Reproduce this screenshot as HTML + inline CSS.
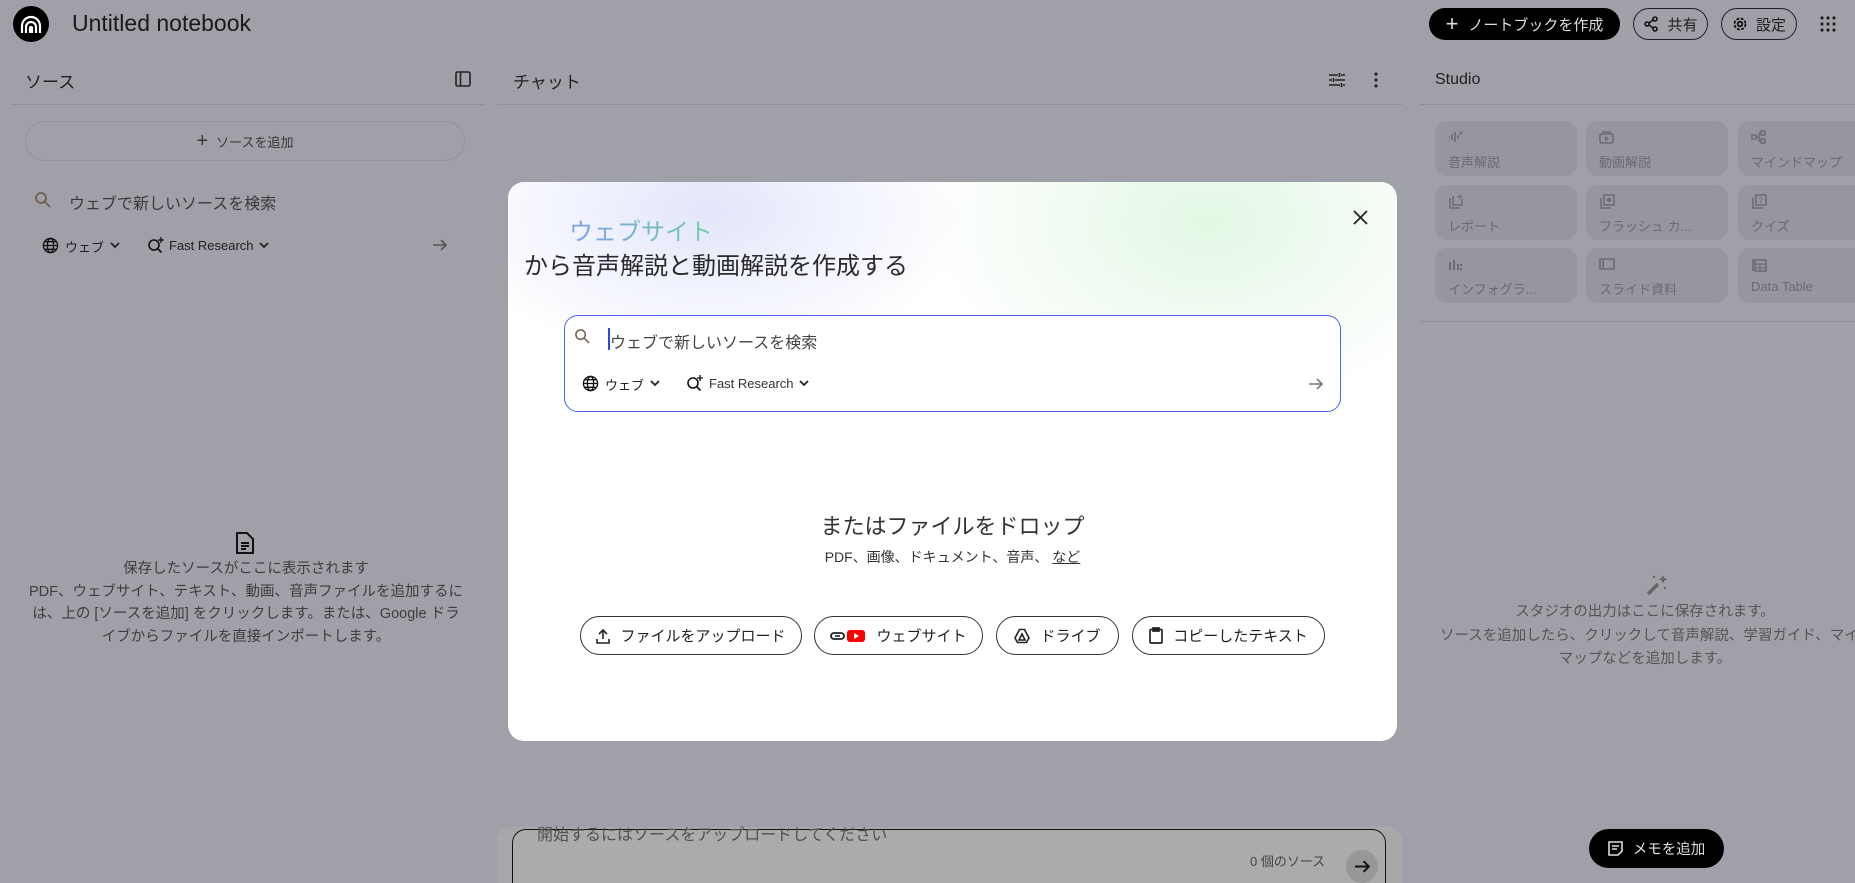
<!DOCTYPE html>
<html style="width:1855px;height:883px;overflow:hidden"><head><meta charset="utf-8"><style>
*{box-sizing:border-box;margin:0;padding:0}
body{width:1855px;height:883px;overflow:hidden;background:#a0a0a8;font-family:"Liberation Sans","Noto Sans CJK JP",sans-serif;color:#1f1f1f;position:relative}
.a{position:absolute;white-space:nowrap}
.pill{position:absolute;border:1.5px solid #222;border-radius:22px;display:flex;align-items:center;justify-content:center;gap:8px;font-size:15px}
.tile{position:absolute;background:#96969e;border-radius:12px;width:142px;height:55px;color:#6a6a70;font-size:13px}
.tile span{position:absolute;left:13px;top:31px}
.tile svg{position:absolute;left:13px;top:9px}
.hr{position:absolute;height:1px;background:#8f8f97}
.mb{position:absolute;top:616px;height:39px;border:1.2px solid #333;border-radius:20px;display:flex;align-items:center;justify-content:center;gap:10px;font-size:15px;color:#222;background:#fff}
</style></head><body>
<!-- header -->
<div class="a" style="left:13px;top:6px;width:36px;height:36px;border-radius:50%;background:#000"></div>
<svg class="a" style="left:19px;top:13px" width="24" height="22" viewBox="0 0 24 22" fill="none" stroke="#fff" stroke-width="2.2"><path d="M3 20V13a9 9 0 0 1 18 0v7"/><path d="M7 20v-6a5 5 0 0 1 10 0v6"/><path d="M11 20v-5a1 1 0 0 1 2 0v5"/></svg>
<div class="a" style="left:72px;top:10px;font-size:23px;color:#1a1a1a">Untitled notebook</div>
<div class="a" style="left:1429px;top:8px;width:191px;height:32px;border-radius:16px;background:#000;color:#ddd;font-size:15px;display:flex;align-items:center;justify-content:center;gap:10px"><span style="font-size:22px">+</span>ノートブックを作成</div>
<div class="pill" style="left:1633px;top:8px;width:75px;height:32px"><svg width="16" height="16" viewBox="0 0 16 16" fill="none" stroke="#111" stroke-width="1.6"><circle cx="12" cy="3" r="2"/><circle cx="4" cy="8" r="2"/><circle cx="12" cy="13" r="2"/><path d="M6 7l4-3M6 9l4 3"/></svg>共有</div>
<div class="pill" style="left:1721px;top:8px;width:76px;height:32px"><svg width="16" height="16" viewBox="0 0 16 16" fill="none" stroke="#111" stroke-width="1.8"><circle cx="8" cy="8" r="2.3"/><circle cx="8" cy="8" r="5.5" stroke-dasharray="3 1.4"/></svg>設定</div>
<svg class="a" style="left:1820px;top:16px" width="16" height="16" viewBox="0 0 16 16" fill="#222"><g><circle cx="2" cy="2" r="1.6"/><circle cx="8" cy="2" r="1.6"/><circle cx="14" cy="2" r="1.6"/><circle cx="2" cy="8" r="1.6"/><circle cx="8" cy="8" r="1.6"/><circle cx="14" cy="8" r="1.6"/><circle cx="2" cy="14" r="1.6"/><circle cx="8" cy="14" r="1.6"/><circle cx="14" cy="14" r="1.6"/></g></svg>

<!-- left panel -->
<div class="a" style="left:25px;top:68px;font-size:17px">ソース</div>
<svg class="a" style="left:455px;top:71px" width="16" height="16" viewBox="0 0 16 16" fill="none" stroke="#222" stroke-width="1.6"><rect x="1" y="1" width="14" height="14" rx="1.5"/><path d="M5.5 1v14"/></svg>
<div class="hr" style="left:11px;top:104px;width:472px"></div>
<div class="a" style="left:25px;top:121px;width:440px;height:40px;border:1px solid #939399;border-radius:20px;display:flex;align-items:center;justify-content:center;gap:8px;font-size:13px;color:#3a3a3a"><span style="font-size:20px">+</span>ソースを追加</div>
<svg class="a" style="left:34px;top:191px" width="18" height="18" viewBox="0 0 18 18" fill="none" stroke="#6e5e4e" stroke-width="1.8"><circle cx="7" cy="7" r="5"/><path d="M11 11l5 5"/></svg>
<div class="a" style="left:69px;top:190px;font-size:16px;color:#3a3a3a">ウェブで新しいソースを検索</div>
<svg class="a" style="left:42px;top:237px" width="17" height="17" viewBox="0 0 18 18" fill="none" stroke="#111" stroke-width="1.4"><circle cx="9" cy="9" r="7.5"/><ellipse cx="9" cy="9" rx="3.3" ry="7.5"/><path d="M1.5 9h15M3 5h12M3 13h12"/></svg>
<div class="a" style="left:65px;top:237px;font-size:13px">ウェブ</div>
<svg class="a" style="left:110px;top:241px" width="10" height="8" viewBox="0 0 10 8" fill="none" stroke="#222" stroke-width="1.8"><path d="M1 2l4 4 4-4"/></svg>
<svg class="a" style="left:147px;top:236px" width="18" height="18" viewBox="0 0 18 18" fill="none" stroke="#111" stroke-width="1.6"><circle cx="7" cy="9" r="5"/><path d="M10.5 12.5l4 4"/><path d="M14 1v6M11 4h6" stroke-width="1.3"/></svg>
<div class="a" style="left:169px;top:238px;font-size:13px">Fast Research</div>
<svg class="a" style="left:259px;top:241px" width="10" height="8" viewBox="0 0 10 8" fill="none" stroke="#222" stroke-width="1.8"><path d="M1 2l4 4 4-4"/></svg>
<svg class="a" style="left:432px;top:237px" width="16" height="16" viewBox="0 0 16 16" fill="none" stroke="#555" stroke-width="1.6"><path d="M1 8h13M9 3l5 5-5 5"/></svg>
<svg class="a" style="left:235px;top:531px" width="20" height="24" viewBox="0 0 20 24" fill="none" stroke="#111" stroke-width="2"><path d="M2 2h10l6 6v14H2z"/><path d="M6 12h8M6 15h8M6 18h5"/></svg>
<div class="a" style="left:0;width:492px;top:558px;text-align:center;font-size:14.5px;line-height:22.5px;color:#3d3d3d;white-space:normal">保存したソースがここに表示されます<br>PDF、ウェブサイト、テキスト、動画、音声ファイルを追加するに<br>は、上の [ソースを追加] をクリックします。または、Google ドラ<br>イブからファイルを直接インポートします。</div>

<!-- chat -->
<div class="a" style="left:513px;top:68px;font-size:17px">チャット</div>
<svg class="a" style="left:1328px;top:71px" width="18" height="18" viewBox="0 0 18 18" fill="none" stroke="#222" stroke-width="1.6"><path d="M1 4h9M13 4h4M1 9h3M7 9h10M1 14h11M15 14h2M11.5 2v4M5.5 7v4M13.5 12v4"/></svg>
<svg class="a" style="left:1373px;top:71px" width="6" height="18" viewBox="0 0 6 18" fill="#222"><circle cx="3" cy="3" r="1.6"/><circle cx="3" cy="9" r="1.6"/><circle cx="3" cy="15" r="1.6"/></svg>
<div class="hr" style="left:497px;top:104px;width:905px"></div>
<div class="a" style="left:497px;top:827px;width:905px;height:56px;background:#a8a8aa;border-radius:14px 14px 0 0"></div>
<div class="a" style="left:512px;top:829px;width:874px;height:70px;border:1.5px solid #111;border-radius:14px;background:#ababab"></div>
<div class="a" style="left:537px;top:821px;font-size:16px;color:#505050">開始するにはソースをアップロードしてください</div>
<div class="a" style="left:1250px;top:851px;font-size:13px;color:#444">0 個のソース</div>
<div class="a" style="left:1346px;top:850px;width:32px;height:33px;border-radius:50%;background:#979797"></div>
<svg class="a" style="left:1354px;top:858px" width="17" height="17" viewBox="0 0 16 16" fill="none" stroke="#111" stroke-width="1.8"><path d="M1 8h13M9 3l5 5-5 5"/></svg>

<!-- studio -->
<div class="a" style="left:1435px;top:71px;font-size:16px">Studio</div>
<div class="hr" style="left:1420px;top:104px;width:435px"></div>
<div class="tile" style="left:1435px;top:121px"><svg width="16" height="14"><path d="M1 7h1M4 4v6M7 2v10M10 5v4" stroke="#6a6a70" stroke-width="1.5"/><path d="M13 1v4M11 3h4" stroke="#6a6a70"/></svg><span>音声解説</span></div>
<div class="tile" style="left:1586px;top:121px"><svg width="16" height="14"><rect x="1" y="4" width="13" height="9" rx="1.5" fill="none" stroke="#6a6a70" stroke-width="1.5"/><path d="M3 2h9" stroke="#6a6a70" stroke-width="1.5"/><path d="M6 6v5l4-2.5z" fill="#6a6a70"/></svg><span>動画解説</span></div>
<div class="tile" style="left:1738px;top:121px;width:130px"><svg width="16" height="14"><rect x="1" y="5" width="4" height="4" fill="none" stroke="#6a6a70" stroke-width="1.4"/><rect x="10" y="1" width="4" height="4" fill="none" stroke="#6a6a70" stroke-width="1.4"/><rect x="10" y="9" width="4" height="4" fill="none" stroke="#6a6a70" stroke-width="1.4"/><path d="M5 7h3M8 3v8h2M8 3h2" stroke="#6a6a70" stroke-width="1.4" fill="none"/></svg><span>マインドマップ</span></div>
<div class="tile" style="left:1435px;top:185px"><svg width="16" height="16"><path d="M2 4v10h10M5 2v9h9V5" fill="none" stroke="#6a6a70" stroke-width="1.5"/><path d="M12 0v5M9.5 2.5h5" stroke="#6a6a70"/></svg><span>レポート</span></div>
<div class="tile" style="left:1586px;top:185px"><svg width="16" height="16"><path d="M2 4v10h10" fill="none" stroke="#6a6a70" stroke-width="1.5"/><rect x="5" y="1" width="10" height="10" fill="none" stroke="#6a6a70" stroke-width="1.5"/><circle cx="10" cy="6" r="2" fill="#6a6a70"/></svg><span>フラッシュ カ...</span></div>
<div class="tile" style="left:1738px;top:185px;width:130px"><svg width="16" height="16"><path d="M2 4v10h10" fill="none" stroke="#6a6a70" stroke-width="1.5"/><rect x="5" y="1" width="10" height="10" fill="none" stroke="#6a6a70" stroke-width="1.5"/><text x="7.5" y="9" font-size="8" fill="#6a6a70">?</text></svg><span>クイズ</span></div>
<div class="tile" style="left:1435px;top:248px"><svg width="16" height="14"><path d="M2 5v8M6 3v10M10 7v6M13 7v2M13 11v2" stroke="#6a6a70" stroke-width="2"/></svg><span>インフォグラ...</span></div>
<div class="tile" style="left:1586px;top:248px"><svg width="16" height="14"><rect x="1" y="2" width="14" height="10" fill="none" stroke="#6a6a70" stroke-width="1.5"/><path d="M4 2v10" stroke="#6a6a70" stroke-width="1.5"/></svg><span>スライド資料</span></div>
<div class="tile" style="left:1738px;top:248px;width:130px"><svg width="16" height="16"><path d="M2 2v12" stroke="#6a6a70" stroke-width="1.5"/><rect x="4" y="3" width="11" height="11" fill="none" stroke="#6a6a70" stroke-width="1.5"/><path d="M4 7h11M4 11h11M9 7v7" stroke="#6a6a70" stroke-width="1.3"/></svg><span>Data Table</span></div>
<div class="hr" style="left:1420px;top:321px;width:435px"></div>
<svg class="a" style="left:1645px;top:573px" width="24" height="24" viewBox="0 0 24 24"><path d="M3 21l10-10" stroke="#666" stroke-width="3.5"/><path d="M18 2l1.3 3 3 1.3-3 1.3-1.3 3-1.3-3-3-1.3 3-1.3z" fill="#666"/><circle cx="9" cy="4" r="1.2" fill="#666"/><circle cx="20" cy="15" r="1.2" fill="#666"/></svg>
<div class="a" style="left:1425px;width:440px;top:601px;text-align:center;font-size:14.5px;line-height:23.5px;color:#555">スタジオの出力はここに保存されます。</div>
<div class="a" style="left:1440px;top:625px;font-size:14.5px;line-height:23.5px;color:#555">ソースを追加したら、クリックして音声解説、学習ガイド、マインド</div>
<div class="a" style="left:1425px;width:440px;top:648px;text-align:center;font-size:14.5px;line-height:23.5px;color:#555">マップなどを追加します。</div>
<div class="a" style="left:1589px;top:829px;width:135px;height:39px;border-radius:20px;background:#000;color:#ddd;font-size:14.5px;display:flex;align-items:center;justify-content:center;gap:10px"><svg width="15" height="15" viewBox="0 0 15 15" fill="none" stroke="#ddd" stroke-width="1.6"><path d="M1 1h13v9l-4 4H1z"/><path d="M4 5h7M4 8h5"/></svg>メモを追加</div>

<!-- modal -->
<div class="a" style="left:508px;top:182px;width:889px;height:559px;border-radius:16px;background:#fff;overflow:hidden">
<div class="a" style="left:-60px;top:-120px;width:520px;height:300px;border-radius:50%;background:radial-gradient(closest-side,#e3e6fb,rgba(255,255,255,0))"></div>
<div class="a" style="left:420px;top:-150px;width:560px;height:380px;border-radius:50%;background:radial-gradient(closest-side,#e3f7e4,rgba(255,255,255,0))"></div>
</div>
<div class="a" style="left:569px;top:212px;font-size:24px;background:linear-gradient(90deg,#7d9cf0,#6fd3a0);-webkit-background-clip:text;background-clip:text;color:transparent">ウェブサイト</div>
<div class="a" style="left:524px;top:246px;font-size:24px;color:#2a2a2a">から音声解説と動画解説を作成する</div>
<svg class="a" style="left:1353px;top:210px" width="15" height="15" viewBox="0 0 15 15" stroke="#222" stroke-width="1.8"><path d="M1 1l13 13M14 1L1 14"/></svg>
<div class="a" style="left:564px;top:315px;width:777px;height:97px;border:1.3px solid #4a64f0;border-radius:14px;background:#fff"></div>
<svg class="a" style="left:574px;top:328px" width="17" height="17" viewBox="0 0 18 18" fill="none" stroke="#776655" stroke-width="1.7"><circle cx="7" cy="7" r="5"/><path d="M11 11l5 5"/></svg>
<div class="a" style="left:608px;top:328px;width:1.5px;height:22px;background:#2a4ad8"></div>
<div class="a" style="left:610px;top:329px;font-size:16px;color:#444">ウェブで新しいソースを検索</div>
<svg class="a" style="left:582px;top:375px" width="17" height="17" viewBox="0 0 18 18" fill="none" stroke="#111" stroke-width="1.4"><circle cx="9" cy="9" r="7.5"/><ellipse cx="9" cy="9" rx="3.3" ry="7.5"/><path d="M1.5 9h15M3 5h12M3 13h12"/></svg>
<div class="a" style="left:605px;top:375px;font-size:13px;color:#222">ウェブ</div>
<svg class="a" style="left:650px;top:379px" width="10" height="8" viewBox="0 0 10 8" fill="none" stroke="#222" stroke-width="1.8"><path d="M1 2l4 4 4-4"/></svg>
<svg class="a" style="left:686px;top:374px" width="18" height="18" viewBox="0 0 18 18" fill="none" stroke="#111" stroke-width="1.6"><circle cx="7" cy="9" r="5"/><path d="M10.5 12.5l4 4"/><path d="M14 1v6M11 4h6" stroke-width="1.3"/></svg>
<div class="a" style="left:709px;top:376px;font-size:13px;color:#333">Fast Research</div>
<svg class="a" style="left:799px;top:379px" width="10" height="8" viewBox="0 0 10 8" fill="none" stroke="#222" stroke-width="1.8"><path d="M1 2l4 4 4-4"/></svg>
<svg class="a" style="left:1308px;top:376px" width="16" height="16" viewBox="0 0 16 16" fill="none" stroke="#777" stroke-width="1.6"><path d="M1 8h13M9 3l5 5-5 5"/></svg>
<div class="a" style="left:508px;width:889px;top:509px;text-align:center;font-size:22px;color:#333">またはファイルをドロップ</div>
<div class="a" style="left:508px;width:889px;top:547px;text-align:center;font-size:14px;color:#333">PDF、画像、ドキュメント、音声、 <u>など</u></div>
<div class="mb" style="left:580px;width:222px"><svg width="14" height="16" viewBox="0 0 14 16" fill="none" stroke="#222" stroke-width="1.6"><path d="M7 11V2M3 6l4-4 4 4M1 11v4h12v-4"/></svg>ファイルをアップロード</div>
<div class="mb" style="left:814px;width:169px"><svg width="36" height="14" viewBox="0 0 36 14"><rect x="1" y="4" width="13" height="6" rx="3" fill="none" stroke="#222" stroke-width="1.8"/><path d="M5 7h5" stroke="#222" stroke-width="1.6"/><rect x="17" y="1" width="18" height="12" rx="3" fill="#f00"/><path d="M24 4v6l5-3z" fill="#fff"/></svg>ウェブサイト</div>
<div class="mb" style="left:996px;width:123px"><svg width="16" height="16" viewBox="0 0 16 16" fill="none" stroke="#222" stroke-width="1.6"><path d="M5.5 1.5h5L15 10l-2.5 4.5h-9L1 10z"/><path d="M8 6l-3 6h6z"/></svg>ドライブ</div>
<div class="mb" style="left:1132px;width:193px"><svg width="14" height="17" viewBox="0 0 14 17" fill="none" stroke="#222" stroke-width="1.7"><rect x="1" y="2.5" width="12" height="13.5" rx="1"/><rect x="4" y="1" width="6" height="3" fill="#222"/></svg>コピーしたテキスト</div>
</body></html>
